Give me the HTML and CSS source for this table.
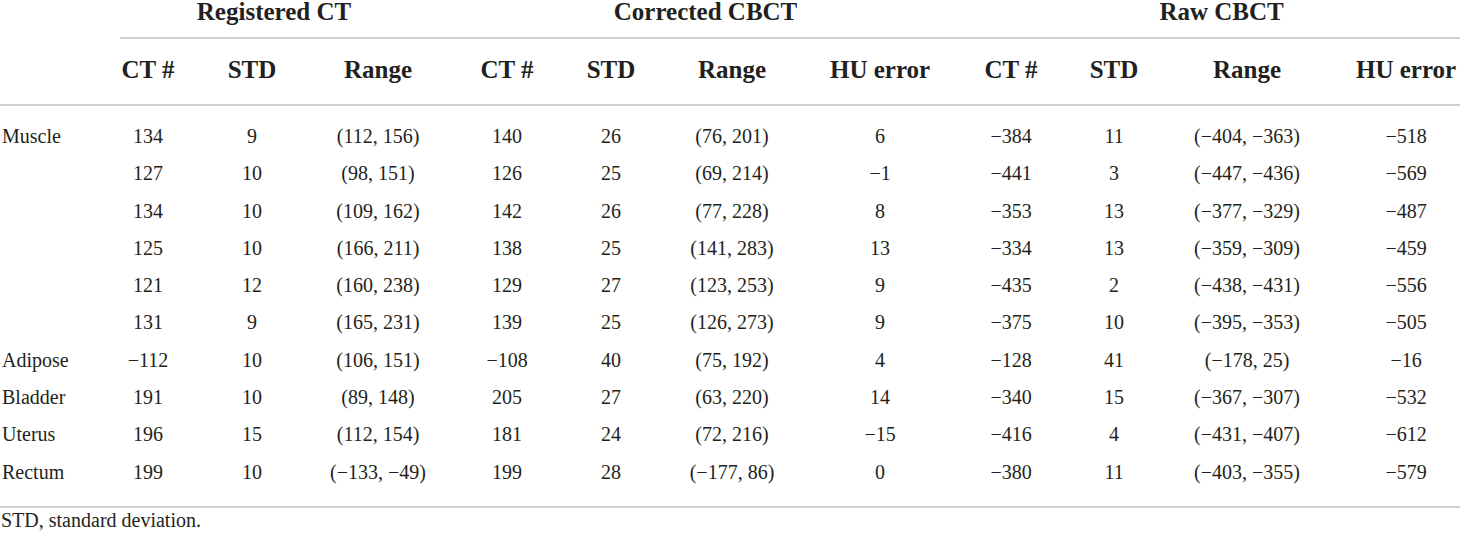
FILE: index.html
```html
<!DOCTYPE html>
<html lang="en">
<head>
<meta charset="utf-8">
<title>CT numbers</title>
<link rel="stylesheet" href="styles.css">
</head>
<body>
<table class="data">
  <colgroup>
    <col class="w-label"><col class="w-56"><col class="w-152"><col class="w-100">
    <col class="w-107"><col class="w-152"><col class="w-90"><col class="w-206">
    <col class="w-56"><col class="w-150"><col class="w-116"><col class="w-155">
  </colgroup>
  <thead>
    <tr class="groups">
      <th class="blank"></th>
      <th colspan="3" class="grp"><div class="grp-label">Registered CT</div></th>
      <th colspan="4" class="grp grp-mid"><div class="grp-label">Corrected CBCT</div></th>
      <th colspan="4" class="grp"><div class="grp-label">Raw CBCT</div></th>
    </tr>
    <tr class="cols">
      <th></th>
      <th>CT #</th><th>STD</th><th>Range</th>
      <th>CT #</th><th>STD</th><th>Range</th><th>HU error</th>
      <th>CT #</th><th>STD</th><th>Range</th><th>HU error</th>
    </tr>
  </thead>
  <tbody>
    <tr><td>Muscle</td><td>134</td><td>9</td><td>(112, 156)</td><td>140</td><td>26</td><td>(76, 201)</td><td>6</td><td>−384</td><td>11</td><td>(−404, −363)</td><td>−518</td></tr>
    <tr><td></td><td>127</td><td>10</td><td>(98, 151)</td><td>126</td><td>25</td><td>(69, 214)</td><td>−1</td><td>−441</td><td>3</td><td>(−447, −436)</td><td>−569</td></tr>
    <tr><td></td><td>134</td><td>10</td><td>(109, 162)</td><td>142</td><td>26</td><td>(77, 228)</td><td>8</td><td>−353</td><td>13</td><td>(−377, −329)</td><td>−487</td></tr>
    <tr><td></td><td>125</td><td>10</td><td>(166, 211)</td><td>138</td><td>25</td><td>(141, 283)</td><td>13</td><td>−334</td><td>13</td><td>(−359, −309)</td><td>−459</td></tr>
    <tr><td></td><td>121</td><td>12</td><td>(160, 238)</td><td>129</td><td>27</td><td>(123, 253)</td><td>9</td><td>−435</td><td>2</td><td>(−438, −431)</td><td>−556</td></tr>
    <tr><td></td><td>131</td><td>9</td><td>(165, 231)</td><td>139</td><td>25</td><td>(126, 273)</td><td>9</td><td>−375</td><td>10</td><td>(−395, −353)</td><td>−505</td></tr>
    <tr><td>Adipose</td><td>−112</td><td>10</td><td>(106, 151)</td><td>−108</td><td>40</td><td>(75, 192)</td><td>4</td><td>−128</td><td>41</td><td>(−178, 25)</td><td>−16</td></tr>
    <tr><td>Bladder</td><td>191</td><td>10</td><td>(89, 148)</td><td>205</td><td>27</td><td>(63, 220)</td><td>14</td><td>−340</td><td>15</td><td>(−367, −307)</td><td>−532</td></tr>
    <tr><td>Uterus</td><td>196</td><td>15</td><td>(112, 154)</td><td>181</td><td>24</td><td>(72, 216)</td><td>−15</td><td>−416</td><td>4</td><td>(−431, −407)</td><td>−612</td></tr>
    <tr><td>Rectum</td><td>199</td><td>10</td><td>(−133, −49)</td><td>199</td><td>28</td><td>(−177, 86)</td><td>0</td><td>−380</td><td>11</td><td>(−403, −355)</td><td>−579</td></tr>
  </tbody>
</table>
<p class="note">STD, standard deviation.</p>
</body>
</html>
```

FILE: styles.css
```css
html, body {
  margin: 0;
  padding: 0;
  background: #ffffff;
}

body {
  font-family: "Liberation Serif", "Times New Roman", serif;
  color: #231f20;
  font-size: 20px;
}

.data {
  width: 1460px;
  table-layout: fixed;
  border-collapse: separate;
  border-spacing: 0;
}

.w-label { width: 120px; }
.w-56 { width: 56px; }
.w-90 { width: 90px; }
.w-100 { width: 100px; }
.w-107 { width: 107px; }
.w-116 { width: 116px; }
.w-150 { width: 150px; }
.w-152 { width: 152px; }
.w-155 { width: 155px; }
.w-206 { width: 206px; }

.data th {
  font-weight: 700;
  font-size: 25px;
  text-align: center;
  white-space: nowrap;
  padding: 0;
}

.grp {
  padding: 0;
}

.grp-mid {
  padding-left: 51px;
  padding-right: 50px;
}

.grp-label {
  line-height: 24px;
  padding-bottom: 13px;
  border-bottom: 2px solid #cfcfcf;
}

.cols th {
  line-height: 26px;
  padding-top: 18px;
  padding-bottom: 21px;
  border-bottom: 2px solid #cfcfcf;
}

.data td {
  padding: 0;
  line-height: 37.3px;
  text-align: center;
  white-space: nowrap;
  font-size: 20px;
}

.data td:first-child {
  text-align: left;
  padding-left: 2px;
}

.data td:nth-child(5),
.cols th:nth-child(5) {
  padding-left: 51px;
}

.data td:nth-child(12),
.cols th:nth-child(12) {
  padding-left: 47px;
}

.data tbody tr:first-child td {
  padding-top: 12px;
}

.data tbody tr:last-child td {
  padding-bottom: 15px;
  border-bottom: 2px solid #cfcfcf;
}

.note {
  margin: 0;
  line-height: 24px;
  font-size: 20px;
  padding-left: 1px;
}
```
